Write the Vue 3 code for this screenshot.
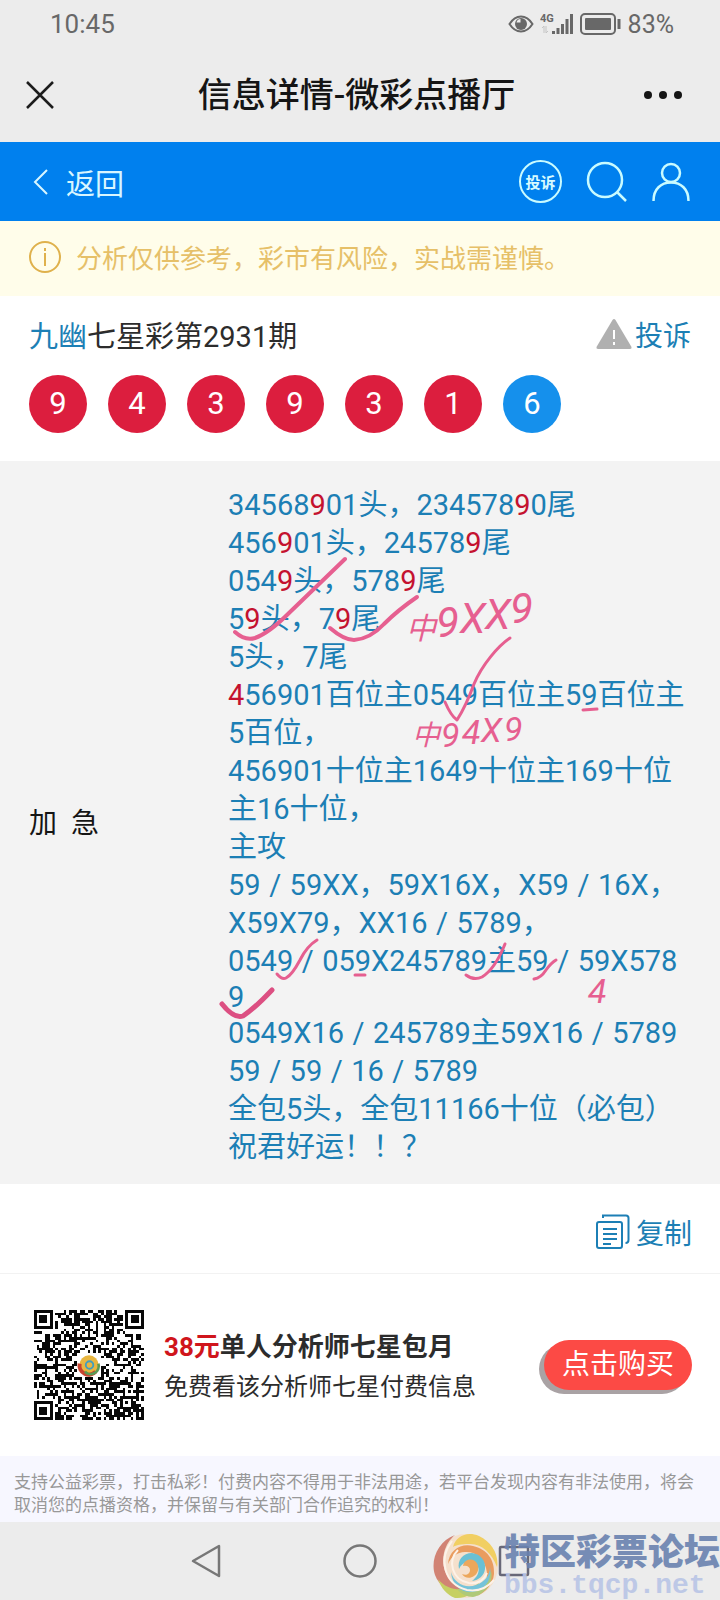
<script setup>
const balls = [9, 4, 3, 9, 3, 1, 6]

// In each row "*" wraps digits that are highlighted as hits.
const rows = [
  '34568*9*01头，234578*9*0尾',
  '456*9*01头，24578*9*尾',
  '054*9*头，578*9*尾',
  '5*9*头，7*9*尾',
  '5头，7尾',
  '*4*56901百位主0549百位主59百位主',
  '5百位，',
  '456901十位主1649十位主169十位',
  '主16十位，',
  '主攻',
  '59/59XX，59X16X，X59/16X，',
  'X59X79，XX16/5789，',
  '0549/059X245789主59/59X578',
  '9',
  '0549X16/245789主59X16/5789',
  '59/59/16/5789',
  '全包5头，全包11166十位（必包）',
  '祝君好运！！？'
].map((row) => {
  const parts = []
  row.split('*').forEach((chunk, i) => {
    chunk.split(/(\/)/).forEach((text) => {
      if (text) parts.push({ text, kind: i % 2 ? 'hit' : text === '/' ? 'slash' : 'plain' })
    })
  })
  return { parts, short: row === '9' }
})

// QR module grid: three finders, one alignment mark, seeded data modules.
const SIZE = 41
function ring(x, y, cx, cy, r) {
  const d = Math.max(Math.abs(x - cx), Math.abs(y - cy))
  return d > r ? null : r === 4 ? d !== 4 && d !== 2 : d !== 1
}
let seed = 20931
let qrPath = ''
for (let y = 0; y < SIZE; y++) {
  for (let x = 0; x < SIZE; x++) {
    seed = (seed * 1103515245 + 12345) % 2147483648
    let on = (seed >> 12) % 100 < 51
    for (const [cx, cy, r] of [[3, 3, 4], [37, 3, 4], [3, 37, 4], [34, 34, 2]]) {
      const v = ring(x, y, cx, cy, r)
      if (v !== null) on = v
    }
    if (Math.abs(x - 20) < 5 && Math.abs(y - 20) < 5) on = false
    if (on) qrPath += `M${x} ${y}h1v1h-1z`
  }
}
</script>

<template>
  <div class="page">
    <header class="top">
      <div class="status">
        <span class="clock">10:45</span>
        <span class="status-icons">
          <svg width="26" height="20" viewBox="0 0 26 20" fill="none" stroke="#686868" stroke-width="2">
            <path d="M1.500 10C5 4.500 9 2.500 13 2.500S21 4.500 24.500 10C21 15.500 17 17.500 13 17.500S5 15.500 1.500 10z" />
            <circle cx="13" cy="10" r="6" fill="#686868" stroke="none" />
            <path d="M8.500 8.500a4.500 4.500 0 0 1 4-3.500v3.500z" fill="#ececec" stroke="none" />
          </svg>
          <svg width="34" height="22" viewBox="0 0 34 22" fill="#686868">
            <text class="net-label" x="0" y="9">4G</text>
            <path d="M12 18h3v3h-3zM16.500 15h3v6h-3zM21 11h3v10h-3zM25.500 6h3v15h-3zM30 1h3v20h-3z" />
            <path d="M2 15l2-2v7M6 13v7l2-2" fill="none" stroke="#c4c4c4" />
          </svg>
          <svg width="42" height="22" viewBox="0 0 42 22" fill="none" stroke="#686868" stroke-width="2">
            <rect x="1" y="1" width="34" height="20" rx="4" />
            <rect x="5" y="5" width="26" height="12" rx="1" fill="#686868" stroke="none" />
            <path d="M39 6v10" stroke-width="3" />
          </svg>
          <span>83%</span>
        </span>
      </div>
      <div class="titlebar">
        <button class="icon-btn close" aria-label="关闭">
          <svg width="30" height="30" viewBox="0 0 30 30" fill="none" stroke="#1c1c1c" stroke-width="2.500">
            <path d="M2 2l26 26M28 2L2 28" />
          </svg>
        </button>
        <h1>信息详情-微彩点播厅</h1>
        <button class="icon-btn" aria-label="更多">
          <svg width="38" height="10" viewBox="0 0 38 10" fill="#151515">
            <circle cx="4" cy="5" r="4" /><circle cx="19" cy="5" r="4" /><circle cx="34" cy="5" r="4" />
          </svg>
        </button>
      </div>
    </header>

    <nav class="bluebar">
      <a class="back" href="#">
        <svg width="16" height="28" viewBox="0 0 16 28" fill="none" stroke="#d8f6ff" stroke-width="2">
          <path d="M14 2L2 14l12 12" />
        </svg>
        <span>返回</span>
      </a>
      <div class="tools">
        <button class="badge">投诉</button>
        <button class="icon-btn" aria-label="搜索">
          <svg width="42" height="42" viewBox="0 0 42 42" fill="none" stroke="#c9fbff" stroke-width="2.500">
            <circle cx="19" cy="19" r="17" /><path d="M31 31l9 9" />
          </svg>
        </button>
        <button class="icon-btn" aria-label="我的">
          <svg width="38" height="40" viewBox="0 0 38 40" fill="none" stroke="#c9fbff" stroke-width="2.500">
            <circle cx="19" cy="11" r="9" /><path d="M1.500 39C1.500 27 9 20.500 19 20.500S36.500 27 36.500 39" />
          </svg>
        </button>
      </div>
    </nav>

    <div class="notice">
      <svg width="34" height="34" viewBox="0 0 34 34" fill="none" stroke="#dfb14c" stroke-width="2">
        <circle cx="17" cy="17" r="15" /><path d="M17 13v13M17 8v3" />
      </svg>
      <span>分析仅供参考，彩市有风险，实战需谨慎。</span>
    </div>

    <section class="summary">
      <div class="headline">
        <h2><a href="#">九幽</a>七星彩第2931期</h2>
        <a class="complain" href="#">
          <svg width="38" height="32" viewBox="0 0 38 32">
            <path d="M17.500 2q1.500-2 3 0L36.500 29q.5 2-1.500 2H3q-2 0-1.500-2z" fill="#b0b0b0" />
            <path d="M19 12v9M19 24v3" stroke="#fff" stroke-width="2" />
          </svg>
          <span>投诉</span>
        </a>
      </div>
      <ul class="balls">
        <li v-for="(n, i) in balls" :key="i" :class="{ special: i === 6 }">{{ n }}</li>
      </ul>
    </section>

    <section class="detail">
      <div class="label">加&nbsp;&nbsp;急</div>
      <div class="rows">
        <p v-for="(row, i) in rows" :key="i" :class="{ short: row.short }">
          <span v-for="(p, j) in row.parts" :key="j" :class="p.kind">{{ p.text }}</span>
        </p>
        <svg class="marks" width="492" height="724" viewBox="0 0 492 724" fill="none" stroke="#e65f90" stroke-width="4" stroke-linecap="round" stroke-linejoin="round">
          <path d="M7 171q10 9 20 6q14-5 34-25L117 98" />
          <path d="M102 167q14 12 24 12q16-1 30-16q14-14 33-27" />
          <path d="M282 177C270 185 254 204 246 223q-8 22-17 36q-6-4-12-18" stroke-width="3" />
          <path d="M355 249l14-1" stroke-width="3" />
          <path d="M49 513q5 6 9 4q6-3 14-18q7-14 17-20" stroke-width="3" />
          <path d="M127 514h10" stroke-width="3" />
          <path d="M238 514q8 6 16 2q13-8 23-33" stroke-width="3" />
          <path d="M306 518q7-1 12-9q5-7 10-10" stroke-width="3" />
          <path d="M-6 543q12 15 21 12q12-8 29-26" stroke-width="5" stroke="#dc4f82" />
          <g class="hand">
            <text x="178" y="178" class="zh">中</text>
            <text x="208" y="176" class="big">9</text>
            <text x="232" y="172" class="big">X</text>
            <text x="257" y="168" class="big">X</text>
            <text x="282" y="162" class="big">9</text>
            <text x="184" y="284" class="zh-small">中</text>
            <text x="213" y="286" class="mid">9</text>
            <text x="234" y="283" class="mid">4</text>
            <text x="253" y="281" class="mid">X</text>
            <text x="276" y="280" class="mid">9</text>
            <text x="360" y="542" class="mid">4</text>
          </g>
        </svg>
      </div>
    </section>

    <div class="copy-row">
      <button class="copy">
        <svg width="36" height="36" viewBox="0 0 36 36" fill="none" stroke="#1c7fb5" stroke-width="2">
          <rect x="2" y="8" width="25" height="26" rx="2" />
          <path d="M8 4V1.500h23q2.500 0 2.500 2.500V26q0 3-3 3M8 15h14M8 20h14M8 25h14M8 30h8" />
        </svg>
        <span>复制</span>
      </button>
    </div>

    <section class="promo">
      <svg class="qr" width="110" height="110" viewBox="0 0 41 41" role="img" aria-label="二维码">
        <path :d="qrPath" fill="#080808" shape-rendering="crispEdges" />
        <circle cx="20.500" cy="20.500" r="3.600" fill="#e8b640" />
        <path d="M17 20a3.500 3.500 0 0 0 6 3" fill="none" stroke="#c8432f" stroke-width="1.500" />
        <path d="M24 20a3 3 0 0 1-5 3" fill="none" stroke="#5a9a55" />
        <circle cx="20.700" cy="20.500" r="1.400" fill="#e8b640" stroke="#3f9ec0" stroke-width=".7" />
      </svg>
      <div class="promo-text">
        <strong><em>38元</em>单人分析师七星包月</strong>
        <span>免费看该分析师七星付费信息</span>
      </div>
      <button class="buy">点击购买</button>
    </section>

    <p class="legal">支持公益彩票，打击私彩！付费内容不得用于非法用途，若平台发现内容有非法使用，将会取消您的点播资格，并保留与有关部门合作追究的权利！</p>

    <footer class="sysnav">
      <button class="icon-btn" aria-label="返回键">
        <svg width="34" height="36" viewBox="0 0 34 36" fill="none" stroke="#777" stroke-width="2.500" stroke-linejoin="round">
          <path d="M30 3v30L4 18z" />
        </svg>
      </button>
      <button class="icon-btn" aria-label="主页键">
        <svg width="34" height="36" viewBox="0 0 34 36" fill="none" stroke="#777" stroke-width="2.500"><circle cx="17" cy="18" r="15.500" /></svg>
      </button>
      <button class="icon-btn" aria-label="最近任务">
        <svg width="34" height="36" viewBox="0 0 34 36" fill="none" stroke="#686878" stroke-width="2.500"><rect x="3" y="4" width="28" height="28" rx="1" /></svg>
      </button>
      <div class="watermark">
        <svg width="68" height="68" viewBox="0 0 68 68">
          <circle cx="34" cy="34" r="32" fill="#f6dfc9" />
          <path d="M23 3C6 9-2 28 3 43c5 13 17 18 31 16C18 53 8 38 12 21c2-8 6-14 11-18z" fill="#cf7868" />
          <path d="M21 15C24 4 35-1 47 4c13 6 20 19 18 31C60 21 49 11 37 12c-8 0-13 1-16 3z" fill="#f2cc54" />
          <path d="M16 32c1-14 13-21 25-18 14 3 22 14 21 28-1 10-8 18-17 22 8-8 12-18 9-28-3-11-12-17-21-16-8 0-14 5-17 12z" fill="#e99450" />
          <path d="M6 47c10 13 29 13 41 4-4 10-13 16-24 15C15 63 9 56 6 47z" fill="#c2cd55" />
          <path d="M25 57c15 4 29-4 34-18 3 12-7 24-18 26-6 0-12-3-16-8z" fill="#a9c66d" />
          <path d="M19 40c3 11 14 17 25 13 9-3 14-10 14-18 2 11-3 20-13 24-13 4-25-4-26-19z" fill="#69bfd8" />
          <path d="M27 37c-2-9 4-16 13-16 9 1 14 8 13 16-1 7-6 11-13 12 5-4 8-9 6-14s-6-7-11-5c-4 1-6 3-8 7z" fill="#5cbcd2" />
          <path d="M31 34c1-6 7-8 12-5 5 4 4 12-1 15-4 3-10 2-12-2 4 2 8 0 8-4 0-3-3-5-7-4z" fill="#eda04c" />
          <path d="M20 9C6 27 12 52 35 58c12 2 20-2 27-10" fill="none" stroke="#fff3e8" stroke-width="2" />
          <path d="M26 18C15 29 20 48 37 51c9 1 15-3 18-10" fill="none" stroke="#fff3e8" stroke-width="2" />
        </svg>
        <div class="watermark-text">
          <b>特区彩票论坛</b>
          <span>bbs.tqcp.net</span>
        </div>
      </div>
    </footer>
  </div>
</template>

<style>
body {
  background: #fff;
}
</style>

<style scoped>
.page {
  font-family: Roboto, "Noto Sans CJK SC", sans-serif;
  color: #2c2c2c;
  background: #fff;
  overflow: hidden;
}
h1, h2, p, ul {
  margin: 0;
  padding: 0;
}
svg {
  display: block;
  flex: none;
}
a {
  color: #1c7fb5;
  text-decoration: none;
}
button {
  font: inherit;
  border: 0;
  padding: 0;
  background: none;
}
.top {
  background: #ececec;
}
.status {
  height: 48px;
  padding: 0 46px 0 50px;
  display: flex;
  align-items: center;
  justify-content: space-between;
  font-size: 26px;
  color: #686868;
}
.status-icons {
  display: flex;
  align-items: center;
  gap: 6px;
  font-size: 25px;
}
.net-label {
  font: bold 11px Roboto, sans-serif;
}
.titlebar {
  height: 94px;
  padding: 0 38px 0 25px;
  display: flex;
  align-items: center;
  justify-content: space-between;
}
.close {
  width: 44px;
}
h1 {
  font-size: 34px;
  line-height: 48px;
  font-weight: 500;
  color: #151515;
}
.bluebar {
  height: 79px;
  padding: 0 30px 0 33px;
  display: flex;
  align-items: center;
  justify-content: space-between;
  background: #0080ee;
}
.back {
  display: flex;
  align-items: center;
  gap: 17px;
  font-size: 29px;
  color: #d8f6ff;
}
.tools {
  display: flex;
  align-items: center;
  gap: 24px;
}
.badge {
  width: 43px;
  height: 43px;
  border: 2px solid #c9fbff;
  border-radius: 50%;
  font-size: 15px;
  font-weight: bold;
  color: #d8fbff;
}
.notice {
  height: 71px;
  padding: 0 28px 4px;
  display: flex;
  align-items: center;
  gap: 14px;
  background: #fffdea;
  color: #e6c068;
  font-size: 26px;
}
.summary {
  padding: 17px 29px 28px;
}
.headline {
  display: flex;
  align-items: center;
  justify-content: space-between;
  height: 42px;
}
h2 {
  font-size: 29px;
  font-weight: 400;
}
.complain {
  display: flex;
  align-items: center;
  gap: 2px;
  font-size: 28px;
}
.balls {
  list-style: none;
  display: flex;
  gap: 21px;
  margin-top: 20px;
}
.balls li {
  width: 58px;
  height: 58px;
  border-radius: 50%;
  background: #dc1e3e;
  color: #fff;
  font-size: 31px;
  line-height: 58px;
  text-align: center;
}
.balls .special {
  background: #1590ec;
}
.detail {
  display: grid;
  grid-template-columns: 228px 1fr;
  align-items: center;
  background: #f3f3f3;
}
.label {
  padding: 0 0 4px 29px;
  font-size: 28px;
  color: #151515;
}
.rows {
  position: relative;
  padding: 25px 0 18px;
  font-size: 29px;
  color: #1c7fb5;
  white-space: nowrap;
}
.rows p {
  line-height: 38px;
}
.rows .short {
  line-height: 34px;
}
.hit {
  color: #c4122f;
}
.slash {
  display: inline-block;
  width: 1em;
  text-align: center;
}
.marks {
  position: absolute;
  left: 0;
  top: 0;
  overflow: visible;
}
.hand text {
  fill: #e65f90;
  stroke: none;
  font-family: Roboto, "Noto Sans CJK SC", sans-serif;
  font-style: italic;
  font-weight: 400;
}
.hand .big {
  font-size: 42px;
}
.hand .mid {
  font-size: 34px;
}
.hand .zh {
  font-size: 30px;
}
.hand .zh-small {
  font-size: 28px;
}
.copy-row {
  height: 90px;
  padding: 6px 28px 0;
  display: flex;
  align-items: center;
  justify-content: flex-end;
  border-bottom: 1px solid #f2f2f2;
  box-sizing: border-box;
}
.copy {
  display: flex;
  align-items: center;
  gap: 5px;
  font-size: 28px;
  color: #1c7fb5;
}
.promo {
  height: 182px;
  padding: 0 28px 0 34px;
  display: flex;
  align-items: center;
  box-sizing: border-box;
}
.promo-text {
  flex: 1;
  margin-left: 20px;
  padding-top: 4px;
  display: flex;
  flex-direction: column;
}
.promo-text strong {
  font-size: 26px;
  line-height: 40px;
}
.promo-text em {
  font-style: normal;
  color: #d0151c;
}
.promo-text span {
  font-size: 24px;
  line-height: 40px;
}
.buy {
  width: 148px;
  height: 50px;
  border-radius: 25px;
  background: #fc4a45;
  box-shadow: -5px 4px 0 #a9a2a4;
  color: #fff;
  font-size: 28px;
  line-height: 46px;
}
.legal {
  padding: 15px 14px 5px;
  background: #f7f7ff;
  color: #989898;
  font-size: 17px;
  line-height: 23px;
}
.sysnav {
  position: relative;
  height: 78px;
  background: #ececec;
  display: flex;
  align-items: center;
  justify-content: center;
  gap: 120px;
}
.watermark {
  position: absolute;
  right: 0;
  bottom: 0;
  display: flex;
  align-items: flex-end;
  gap: 4px;
  opacity: 0.9;
}
.watermark-text {
  display: flex;
  flex-direction: column;
}
.watermark-text b {
  font-size: 36px;
  font-weight: 900;
  line-height: 38px;
  color: #6a82b0;
}
.watermark-text span {
  font: bold 28px "Liberation Mono", monospace;
  line-height: 28px;
  color: #b9c5e6;
}
</style>
